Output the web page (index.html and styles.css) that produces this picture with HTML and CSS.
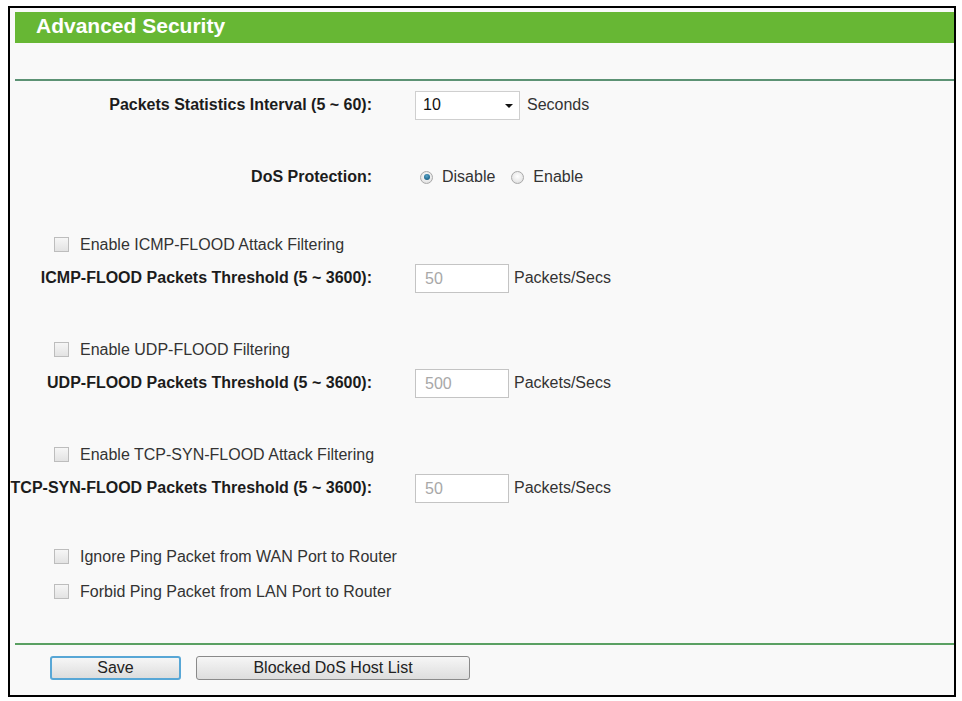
FILE: index.html
```html
<!DOCTYPE html>
<html>
<head>
<meta charset="utf-8">
<title>Advanced Security</title>
<link rel="stylesheet" href="styles.css">
</head>
<body>
<div class="frame">
  <div class="header">Advanced Security</div>
  <div class="rule-top"></div>

  <div class="form">
    <div class="row row-first">
      <div class="lbl">Packets Statistics Interval (5 ~ 60):</div>
      <div class="ctl">
        <div class="select"><span class="select-val">10</span><span class="caret"></span></div>
        <span class="unit unit-sec">Seconds</span>
      </div>
    </div>

    <div class="row gap-38">
      <div class="lbl">DoS Protection:</div>
      <div class="ctl radios">
        <span class="radio checked"></span><span class="radio-text">Disable</span>
        <span class="radio"></span><span class="radio-text">Enable</span>
      </div>
    </div>

    <div class="check-row gap-34">
      <span class="checkbox"></span><span class="check-text">Enable ICMP-FLOOD Attack Filtering</span>
    </div>
    <div class="row">
      <div class="lbl">ICMP-FLOOD Packets Threshold (5 ~ 3600):</div>
      <div class="ctl">
        <div class="input">50</div>
        <span class="unit">Packets/Secs</span>
      </div>
    </div>

    <div class="check-row gap-38">
      <span class="checkbox"></span><span class="check-text">Enable UDP-FLOOD Filtering</span>
    </div>
    <div class="row">
      <div class="lbl">UDP-FLOOD Packets Threshold (5 ~ 3600):</div>
      <div class="ctl">
        <div class="input">500</div>
        <span class="unit">Packets/Secs</span>
      </div>
    </div>

    <div class="check-row gap-38">
      <span class="checkbox"></span><span class="check-text">Enable TCP-SYN-FLOOD Attack Filtering</span>
    </div>
    <div class="row">
      <div class="lbl">TCP-SYN-FLOOD Packets Threshold (5 ~ 3600):</div>
      <div class="ctl">
        <div class="input">50</div>
        <span class="unit">Packets/Secs</span>
      </div>
    </div>

    <div class="check-row tall gap-34">
      <span class="checkbox"></span><span class="check-text">Ignore Ping Packet from WAN Port to Router</span>
    </div>
    <div class="check-row tall">
      <span class="checkbox"></span><span class="check-text">Forbid Ping Packet from LAN Port to Router</span>
    </div>
  </div>

  <div class="rule-bottom"></div>
  <div class="buttons">
    <button class="btn btn-save">Save</button>
    <button class="btn btn-list">Blocked DoS Host List</button>
  </div>
</div>
</body>
</html>
```

FILE: styles.css
```css
html, body {
  margin: 0;
  padding: 0;
  background: #ffffff;
}

body {
  font-family: "Liberation Sans", Arial, sans-serif;
  font-size: 16px;
  color: #333333;
}

.frame {
  box-sizing: border-box;
  width: 948px;
  height: 691px;
  margin: 6px 0 0 8px;
  border: 2px solid #000000;
  background: #f9f9f9;
  padding: 4px 0 0 5px;
}

.header {
  height: 27px;
  line-height: 27px;
  padding: 0 0 4px 21px;
  background: #67b734;
  color: #ffffff;
  font-size: 21px;
  font-weight: bold;
}

.rule-top {
  margin-top: 36px;
  height: 2px;
  background: #5c9274;
}

.form {
  display: flex;
  flex-direction: column;
}

.row {
  display: flex;
  align-items: center;
  height: 34px;
}

.row-first {
  margin-top: 7px;
}

.gap-38 {
  margin-top: 38px;
}

.gap-34 {
  margin-top: 34px;
}

.lbl {
  width: 357px;
  margin-right: 43px;
  display: flex;
  justify-content: flex-end;
  white-space: nowrap;
  font-weight: bold;
  color: #1c1c1c;
}

.ctl {
  display: flex;
  align-items: center;
  white-space: nowrap;
}

.select {
  box-sizing: border-box;
  width: 105px;
  height: 29px;
  border: 1px solid #cfcfcf;
  background: #ffffff;
  display: flex;
  align-items: center;
  justify-content: space-between;
  padding: 0 6px 0 7px;
  color: #111111;
}

.caret {
  width: 0;
  height: 0;
  border-left: 4px solid transparent;
  border-right: 4px solid transparent;
  border-top: 4px solid #111111;
  margin-top: 1px;
}

.unit {
  margin-left: 5px;
  color: #333333;
}

.unit-sec {
  margin-left: 7px;
}

.radios {
  padding-left: 5px;
}

.radio {
  box-sizing: border-box;
  width: 13px;
  height: 13px;
  border-radius: 50%;
  border: 1px solid #a9a9a9;
  background: radial-gradient(circle at 50% 40%, #ffffff 0%, #e9e9e9 60%, #d2d2d2 100%);
  display: inline-flex;
  align-items: center;
  justify-content: center;
}

.radio.checked::after {
  content: "";
  width: 6px;
  height: 6px;
  border-radius: 50%;
  background: radial-gradient(circle at 45% 35%, #5aa4c8 0%, #236d93 60%, #174f6e 100%);
}

.radio-text {
  margin-left: 9px;
  margin-right: 16px;
  color: #333333;
}

.check-row {
  display: flex;
  align-items: center;
  height: 33px;
  padding-left: 39px;
}

.check-row.tall {
  height: 35px;
}

.checkbox {
  box-sizing: border-box;
  width: 15px;
  height: 15px;
  border: 1px solid #bdbdbd;
  background: linear-gradient(#f6f6f6, #e3e3e3);
  margin-right: 11px;
}

.check-text {
  color: #333333;
}

.input {
  box-sizing: border-box;
  width: 94px;
  height: 29px;
  border: 1px solid #c4c4c4;
  background: #ffffff;
  padding-left: 9px;
  line-height: 27px;
  color: #a8a8a8;
}

.rule-bottom {
  margin-top: 34px;
  height: 2px;
  background: #5aa062;
}

.buttons {
  display: flex;
  gap: 15px;
  padding: 11px 0 0 35px;
}

.btn {
  box-sizing: border-box;
  height: 24px;
  font-family: "Liberation Sans", Arial, sans-serif;
  font-size: 16px;
  color: #222222;
  background: linear-gradient(#f6f6f6, #dddddd);
  border-radius: 3px;
  padding: 0;
  cursor: pointer;
}

.btn-save {
  width: 131px;
  border: 2px solid #58a7d6;
}

.btn-list {
  width: 274px;
  border: 1px solid #8a8a8a;
}
```
